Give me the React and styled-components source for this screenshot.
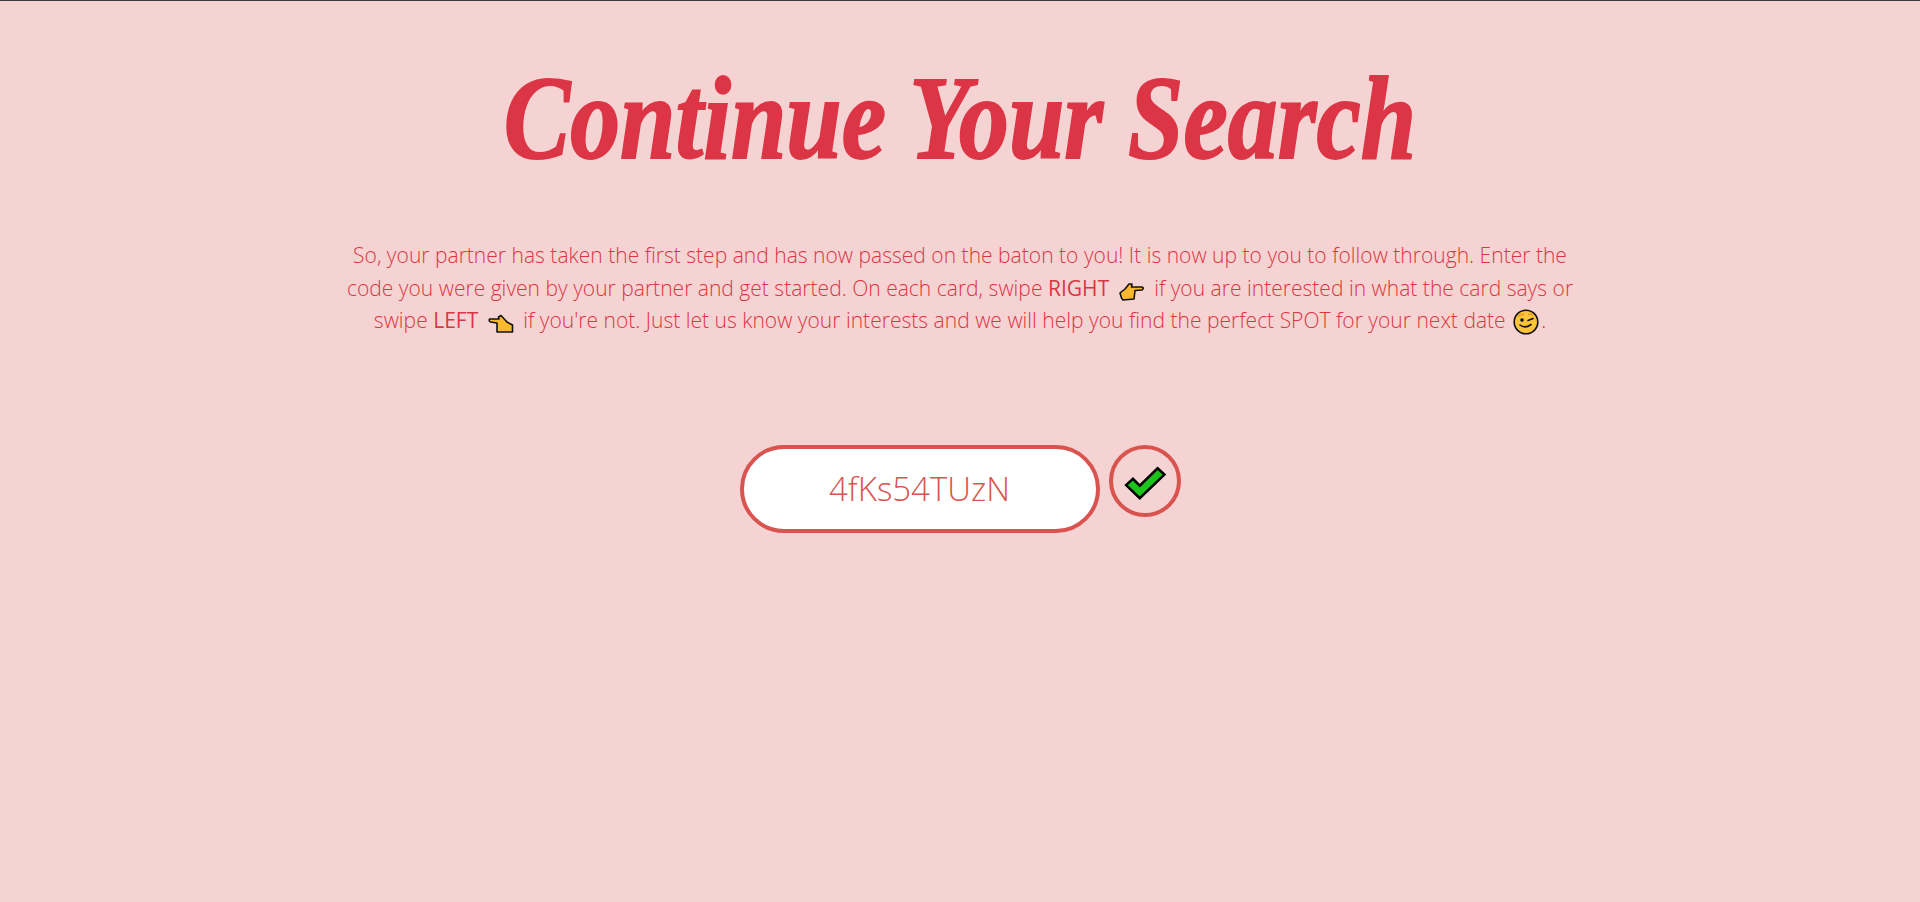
import React from "react";
import styled, { createGlobalStyle } from "styled-components";

const GlobalStyle = createGlobalStyle`
  html, body {
    margin: 0;
    padding: 0;
    background: #f5d3d3;
  }
`;

const Page = styled.div`
  height: 902px;
  box-sizing: border-box;
  border-top: 1px solid #343a40;
  background: #f5d3d3;
  display: flex;
  flex-direction: column;
  align-items: center;
  overflow: hidden;
`;

const Title = styled.h1`
  margin: 59px 0 0;
  height: 118px;
  font-family: "Liberation Serif", serif;
  font-weight: 700;
  font-style: italic;
  font-size: 118px;
  line-height: 118px;
  color: #dc3545;
  white-space: nowrap;
  transform: scaleX(0.845);
  -webkit-text-stroke: 2px #dc3545;
`;

const Intro = styled.p`
  margin: 61px 0 0;
  width: 1300px;
  font-family: "Open Sans", sans-serif;
  font-weight: 300;
  font-size: 21.05px;
  line-height: 32.5px;
  color: #dc3545;
  text-align: center;
`;

const Strong = styled.span`
  font-weight: 400;
`;

const Emoji = styled.svg`
  display: inline-block;
  vertical-align: ${(p) => p.$drop || -6}px;
  margin: 0 ${(p) => p.$gap || 0}px;
`;

const CodeRow = styled.div`
  margin-top: 108px;
  display: flex;
  align-items: flex-start;
  gap: 9px;
`;

const CodeInput = styled.input`
  width: 360px;
  height: 88px;
  box-sizing: border-box;
  border: 4px solid #d9534f;
  border-radius: 44px;
  background: #fff;
  outline: none;
  text-align: center;
  font-family: "Open Sans", sans-serif;
  font-weight: 300;
  font-size: 33px;
  color: #d9534f;
`;

const CheckButton = styled.button`
  width: 72px;
  height: 72px;
  box-sizing: border-box;
  padding: 4px 0 0;
  border: 4px solid #d9534f;
  border-radius: 50%;
  background: transparent;
  display: flex;
  align-items: center;
  justify-content: center;
`;

function PointRight() {
  return (
    <Emoji width="28" height="20" viewBox="0 0 26 20" $gap={3}>
      <path
        d="M1 11 L6 7 L10 2 L13 2 L12.5 5 L23 5 Q25.5 6 23 8 L16 8.5 L15 17 L4 18 L2.5 16 Z"
        fill="#fdb92e"
        stroke="#111"
        strokeWidth="1.6"
        strokeLinejoin="round"
      />
    </Emoji>
  );
}

function PointLeft() {
  return (
    <Emoji width="28" height="20" viewBox="0 0 26 20" $gap={3}>
      <path
        d="M1.5 5 Q0.5 7 2.5 8 L9 9 L9 18 L24.5 18 L24.5 11 L19 8 L13 1.5 L10.5 3 L11 5 Z"
        fill="#fdb92e"
        stroke="#111"
        strokeWidth="1.6"
        strokeLinejoin="round"
      />
    </Emoji>
  );
}

function Wink() {
  return (
    <Emoji width="26" height="26" viewBox="0 0 26 26" $gap={2} $drop={-7}>
      <circle cx="13" cy="13" r="11.8" fill="#fcc43a" stroke="#111" strokeWidth="1.6" />
      <circle cx="9" cy="11" r="1.8" fill="#111" />
      <path d="M15 11.5 L20 9.5" stroke="#111" strokeWidth="1.6" fill="none" strokeLinecap="round" />
      <path d="M7 16 Q12 20 18 15.5" stroke="#111" strokeWidth="1.6" fill="none" strokeLinecap="round" />
      <path d="M5.5 7.5 Q8 4.5 11 5.5 M15 5.5 Q18 4 20.5 6.5" stroke="#e8962a" strokeWidth="1.4" fill="none" />
    </Emoji>
  );
}

function Check() {
  return (
    <svg width="42" height="34" viewBox="0 0 40 32">
      <path
        d="M2 18 L8.5 12 L15 18.5 L32 2 L38.5 8 L15 30.5 Z"
        fill="#1ac41a"
        stroke="#000"
        strokeWidth="2.4"
        strokeLinejoin="miter"
      />
    </svg>
  );
}

export default function App() {
  return (
    <Page>
      <GlobalStyle />
      <Title>Continue Your Search</Title>
      <Intro>
        So, your partner has taken the first step and has now passed on the baton to you! It is now up to you to follow through. Enter the
        <br />
        code you were given by your partner and get started. On each card, swipe <Strong>RIGHT</Strong> <PointRight /> if you are interested in what the card says or
        <br />
        swipe <Strong>LEFT</Strong> <PointLeft /> if you're not. Just let us know your interests and we will help you find the perfect SPOT for your next date <Wink />.
      </Intro>
      <CodeRow>
        <CodeInput defaultValue="4fKs54TUzN" />
        <CheckButton>
          <Check />
        </CheckButton>
      </CodeRow>
    </Page>
  );
}
